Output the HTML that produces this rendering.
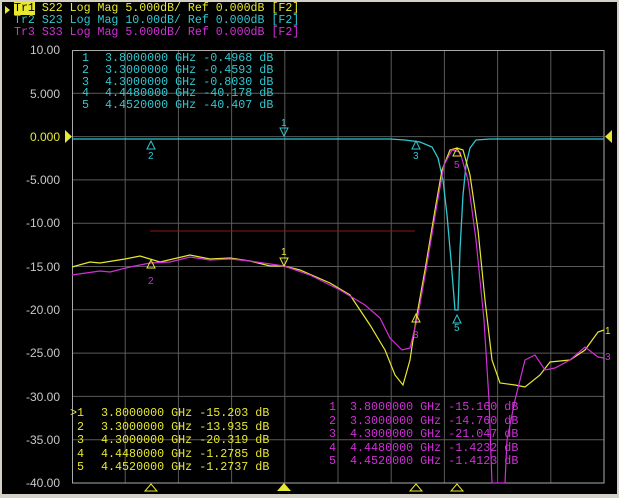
<!DOCTYPE html>
<html><head><style>
html,body{margin:0;padding:0;background:#d4d0c8;}
#w{position:relative;width:615px;height:492px;left:2px;top:2px;background:#000;overflow:hidden;}
.t{position:absolute;font-family:"Liberation Mono",monospace;white-space:pre;}
.h{font-size:11.6px;line-height:12px;}
.y{position:absolute;right:557px;font-family:"Liberation Sans",sans-serif;font-size:12px;color:#c8c8c8;text-align:right;width:60px;}
.m{font-size:11.7px;white-space:normal;width:260px;}
.m div{height:11.8px;line-height:11.8px;position:relative;}
.m span{position:absolute;white-space:pre;top:0;}
</style></head><body>
<div id="w">
<svg width="615" height="492" style="position:absolute;left:0;top:0" viewBox="2 2 615 492">
<g stroke="#5a5a5a" stroke-width="1">
<line x1="72" y1="93.3" x2="604" y2="93.3"/><line x1="72" y1="136.6" x2="604" y2="136.6"/>
<line x1="72" y1="179.9" x2="604" y2="179.9"/><line x1="72" y1="223.2" x2="604" y2="223.2"/>
<line x1="72" y1="266.5" x2="604" y2="266.5"/><line x1="72" y1="309.8" x2="604" y2="309.8"/>
<line x1="72" y1="353.1" x2="604" y2="353.1"/><line x1="72" y1="396.4" x2="604" y2="396.4"/>
<line x1="72" y1="439.7" x2="604" y2="439.7"/>
<line x1="125.2" y1="50" x2="125.2" y2="483"/><line x1="178.4" y1="50" x2="178.4" y2="483"/>
<line x1="231.6" y1="50" x2="231.6" y2="483"/><line x1="284.8" y1="50" x2="284.8" y2="483"/>
<line x1="338" y1="50" x2="338" y2="483"/><line x1="391.2" y1="50" x2="391.2" y2="483"/>
<line x1="444.4" y1="50" x2="444.4" y2="483"/><line x1="497.6" y1="50" x2="497.6" y2="483"/>
<line x1="550.8" y1="50" x2="550.8" y2="483"/>
</g>
<rect x="72.5" y="50.5" width="531.5" height="432.5" fill="none" stroke="#aaa"/>
<line x1="150" y1="231" x2="415" y2="231" stroke="#8a1a10"/>
<polyline fill="none" stroke="#30c8d0" stroke-width="1.3" points="72,139 300,139 390,139 405,140 420,142 432,147 438,158 443,180 447,215 451,260 455,310 458,310 460,250 463,195 466,165 470,148 476,140 490,139 604,139"/>
<polyline fill="none" stroke="#e8e830" stroke-width="1.2" points="72,267 90,262 100,263 125,259 140,256 160,262 190,255 210,259 230,258 250,261 270,266 284,266 300,270 330,283 350,295 370,325 385,350 395,375 403,385 410,360 416,320 425,270 435,210 442,170 450,150 457,148 463,150 470,175 478,230 485,300 492,360 500,383 515,385 525,387 540,375 550,362 570,360 585,350 598,332 604,330"/>
<polyline fill="none" stroke="#d030d8" stroke-width="1.2" points="72,275 100,271 110,272 130,267 150,263 170,262 190,257 210,260 230,259 250,261 284,266 310,275 340,290 365,305 380,318 390,338 402,350 410,348 418,315 426,270 436,210 444,165 452,150 460,152 468,180 476,240 484,320 489,400 492,483 505,483 507,440 515,400 525,360 535,355 545,370 555,368 570,360 585,347 598,357 604,358"/>
<g fill="none" stroke-width="1">
<path d="M147,149 L151,141 L155,149 Z" stroke="#30c8d0"/>
<path d="M280,128 L284,136 L288,128 Z" stroke="#30c8d0"/>
<path d="M412,149 L416,141 L420,149 Z" stroke="#30c8d0"/>
<path d="M453,323 L457,315 L461,323 Z" stroke="#30c8d0"/>
<path d="M147,268 L151,260 L155,268 Z" stroke="#e8e830"/>
<path d="M280,258 L284,266 L288,258 Z" stroke="#e8e830"/>
<path d="M412,322 L416,314 L420,322 Z" stroke="#e8e830"/>
<path d="M453,156 L457,148 L461,156 Z" stroke="#e8e830"/>
<path d="M145,491 L151,484 L157,491 Z" stroke="#e8e830"/>
<path d="M410,491 L416,484 L422,491 Z" stroke="#e8e830"/>
<path d="M451,491 L457,484 L463,491 Z" stroke="#e8e830"/>
</g>
<path d="M277,491 L284,483 L291,491 Z" fill="#e8e830"/>
<path d="M65,130 L72,136.6 L65,143 Z" fill="#e8e830"/>
<path d="M612,130 L605,136.6 L612,143 Z" fill="#e8e830"/>
<path d="M5,6 L10,10 L5,14 Z" fill="#e8e830"/>
<g font-family="Liberation Sans,sans-serif" font-size="10">
<text x="148" y="159" fill="#30c8d0">2</text><text x="281" y="126" fill="#30c8d0">1</text>
<text x="413" y="159" fill="#30c8d0">3</text><text x="454" y="331" fill="#30c8d0">5</text>
<text x="148" y="284" fill="#d030d8">2</text><text x="281" y="255" fill="#e8e830">1</text>
<text x="413" y="338" fill="#d030d8">3</text><text x="454" y="168" fill="#d030d8">5</text>
<text x="605" y="334" fill="#e8e830">1</text><text x="605" y="360" fill="#d030d8">3</text>
</g>
</svg>
<div class="t h" style="left:12px;top:1px;color:#e8e830"><span style="background:#e8e830;color:#000">Tr1</span> S22 Log Mag 5.000dB/ Ref 0.000dB [F2]</div>
<div class="t h" style="left:12px;top:13px;color:#30c8d0">Tr2 S23 Log Mag 10.00dB/ Ref 0.000dB [F2]</div>
<div class="t h" style="left:12px;top:25px;color:#d030d8">Tr3 S33 Log Mag 5.000dB/ Ref 0.000dB [F2]</div>
<div class="y" style="top:41px">10.00</div>
<div class="y" style="top:85px">5.000</div>
<div class="y" style="top:128px;color:#e8e830">0.000</div>
<div class="y" style="top:171px">-5.000</div>
<div class="y" style="top:214px">-10.00</div>
<div class="y" style="top:258px">-15.00</div>
<div class="y" style="top:301px">-20.00</div>
<div class="y" style="top:344px">-25.00</div>
<div class="y" style="top:388px">-30.00</div>
<div class="y" style="top:431px">-35.00</div>
<div class="y" style="top:474px">-40.00</div>
<div class="t m" style="left:80px;top:51px;color:#30c8d0"><div><span style="left:0">1</span><span style="left:23px">3.8000000 GHz -0.4968 dB</span></div><div><span style="left:0">2</span><span style="left:23px">3.3000000 GHz -0.4593 dB</span></div><div><span style="left:0">3</span><span style="left:23px">4.3000000 GHz -0.8030 dB</span></div><div><span style="left:0">4</span><span style="left:23px">4.4480000 GHz -40.178 dB</span></div><div><span style="left:0">5</span><span style="left:23px">4.4520000 GHz -40.407 dB</span></div></div>
<div class="t m" style="left:70px;top:406px;color:#e8e830"><div style="height:13.5px"><span style="left:-2px">&gt;1</span><span style="left:29px">3.8000000 GHz -15.203 dB</span></div><div style="height:13.5px"><span style="left:5px">2</span><span style="left:29px">3.3000000 GHz -13.935 dB</span></div><div style="height:13.5px"><span style="left:5px">3</span><span style="left:29px">4.3000000 GHz -20.319 dB</span></div><div style="height:13.5px"><span style="left:5px">4</span><span style="left:29px">4.4480000 GHz -1.2785 dB</span></div><div style="height:13.5px"><span style="left:5px">5</span><span style="left:29px">4.4520000 GHz -1.2737 dB</span></div></div>
<div class="t m" style="left:327px;top:400px;color:#d030d8"><div style="height:13.5px"><span style="left:0">1</span><span style="left:21px">3.8000000 GHz -15.160 dB</span></div><div style="height:13.5px"><span style="left:0">2</span><span style="left:21px">3.3000000 GHz -14.760 dB</span></div><div style="height:13.5px"><span style="left:0">3</span><span style="left:21px">4.3000000 GHz -21.047 dB</span></div><div style="height:13.5px"><span style="left:0">4</span><span style="left:21px">4.4480000 GHz -1.4232 dB</span></div><div style="height:13.5px"><span style="left:0">5</span><span style="left:21px">4.4520000 GHz -1.4123 dB</span></div></div>
</div>
</body></html>
